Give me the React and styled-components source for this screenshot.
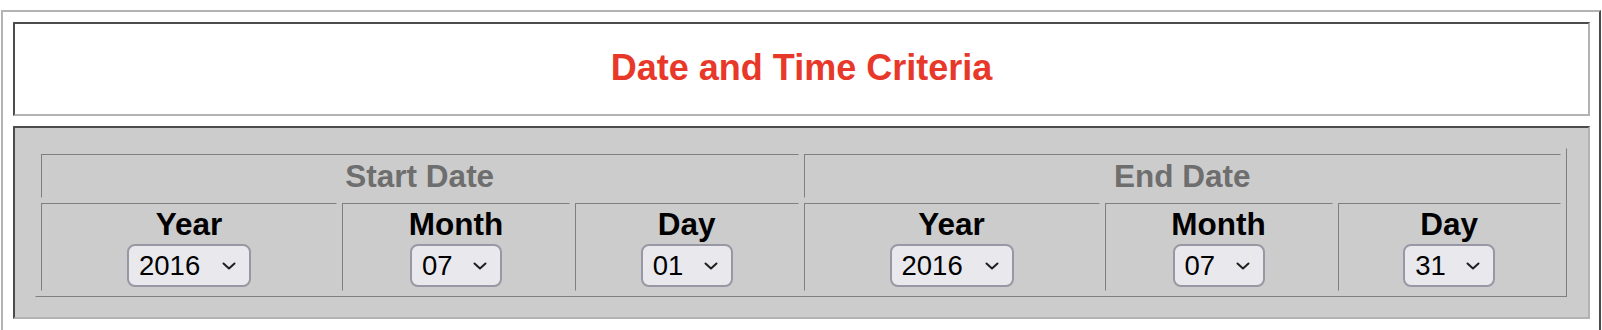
import React from 'react';
import styled, { createGlobalStyle } from 'styled-components';

const GlobalStyle = createGlobalStyle`
  html, body { margin: 0; padding: 0; background: #ffffff; }
  body { font-family: "Liberation Sans", Arial, Helvetica, sans-serif; }
`;

const Frame = styled.div`
  box-sizing: border-box;
  width: 1600px;
  margin: 10px 0 0 1px;
  padding: 10px 9px 14px 10px;
  border: 2px solid;
  border-color: #b3b3b3 #4a4a4a #4a4a4a #b3b3b3;
  display: flex;
  flex-direction: column;
  gap: 10px;
`;

const TitleCell = styled.div`
  height: 90px;
  border: 2px solid;
  border-color: #4c4c4c #b3b3b3 #b3b3b3 #4c4c4c;
  background: #ffffff;
  display: flex;
  align-items: center;
  justify-content: center;
`;

const Title = styled.h1`
  margin: 0;
  padding-bottom: 3px;
  font-size: 36px;
  line-height: 1.15;
  font-weight: 700;
  color: #e8382a;
`;

const Panel = styled.div`
  border: 2px solid;
  border-color: #4c4c4c #b3b3b3 #b3b3b3 #4c4c4c;
  background: #cccccc;
  padding: 20px 21px 20px 20px;
`;

const DateGrid = styled.div`
  display: grid;
  grid-template-columns: 296px 228px 1fr 296px 228px 1fr;
  grid-template-rows: 44px 88px;
  gap: 5px;
  padding: 5px;
  border: 1px solid;
  border-color: #cccccc #7f7f7f #7f7f7f #cccccc;
`;

const GroupHead = styled.div`
  grid-column: span 3;
  box-sizing: border-box;
  border: 1px solid;
  border-color: #7f7f7f #cccccc #cccccc #7f7f7f;
  display: flex;
  align-items: center;
  justify-content: center;
  font-size: 31.5px;
  line-height: 34px;
  font-weight: 700;
  color: #6e6e6e;
`;

const FieldCell = styled.div`
  box-sizing: border-box;
  border: 1px solid;
  border-color: #7f7f7f #cccccc #cccccc #7f7f7f;
  display: flex;
  flex-direction: column;
  align-items: center;
  justify-content: center;
  gap: 3px;
`;

const FieldLabel = styled.div`
  font-size: 31.5px;
  line-height: 34px;
  font-weight: 700;
  color: #000000;
`;

const SelectBox = styled.div`
  box-sizing: border-box;
  width: ${(p) => p.$width}px;
  height: 43px;
  border: 2px solid #9898a4;
  border-radius: 8px;
  background: #e9e9ed;
  padding: 0 13px 0 10px;
  display: flex;
  align-items: center;
  gap: 6px;
`;

const NativeSelect = styled.select`
  appearance: none;
  -webkit-appearance: none;
  flex: 1;
  min-width: 0;
  height: 100%;
  margin: 0;
  padding: 0;
  border: none;
  outline: none;
  background: transparent;
  font-family: "Liberation Sans", Arial, Helvetica, sans-serif;
  font-size: 27.5px;
  color: #000000;
  cursor: pointer;
`;

const ChevronIcon = styled.svg`
  flex: none;
  width: 14px;
  height: 8px;
`;

const Chevron = () => (
  <ChevronIcon viewBox="0 0 14 8" aria-hidden="true">
    <path
      d="M1.5 1.5 L7 6.5 L12.5 1.5"
      fill="none"
      stroke="#1e1e1e"
      strokeWidth="2"
      strokeLinecap="round"
      strokeLinejoin="round"
    />
  </ChevronIcon>
);

const pad = (n) => String(n).padStart(2, '0');
const YEARS = ['2014', '2015', '2016', '2017', '2018'];
const MONTHS = Array.from({ length: 12 }, (_, i) => pad(i + 1));
const DAYS = Array.from({ length: 31 }, (_, i) => pad(i + 1));

const Field = ({ label, options, value, width }) => (
  <FieldCell>
    <FieldLabel>{label}</FieldLabel>
    <SelectBox $width={width}>
      <NativeSelect defaultValue={value}>
        {options.map((o) => (
          <option key={o} value={o}>
            {o}
          </option>
        ))}
      </NativeSelect>
      <Chevron />
    </SelectBox>
  </FieldCell>
);

const ranges = [
  { title: 'Start Date', year: '2016', month: '07', day: '01' },
  { title: 'End Date', year: '2016', month: '07', day: '31' },
];

export default function App() {
  return (
    <>
      <GlobalStyle />
      <Frame>
        <TitleCell>
          <Title>Date and Time Criteria</Title>
        </TitleCell>
        <Panel>
          <DateGrid>
            {ranges.map((r) => (
              <GroupHead key={r.title}>{r.title}</GroupHead>
            ))}
            {ranges.map((r) => (
              <React.Fragment key={r.title}>
                <Field label="Year" options={YEARS} value={r.year} width={124} />
                <Field label="Month" options={MONTHS} value={r.month} width={92} />
                <Field label="Day" options={DAYS} value={r.day} width={92} />
              </React.Fragment>
            ))}
          </DateGrid>
        </Panel>
      </Frame>
    </>
  );
}
